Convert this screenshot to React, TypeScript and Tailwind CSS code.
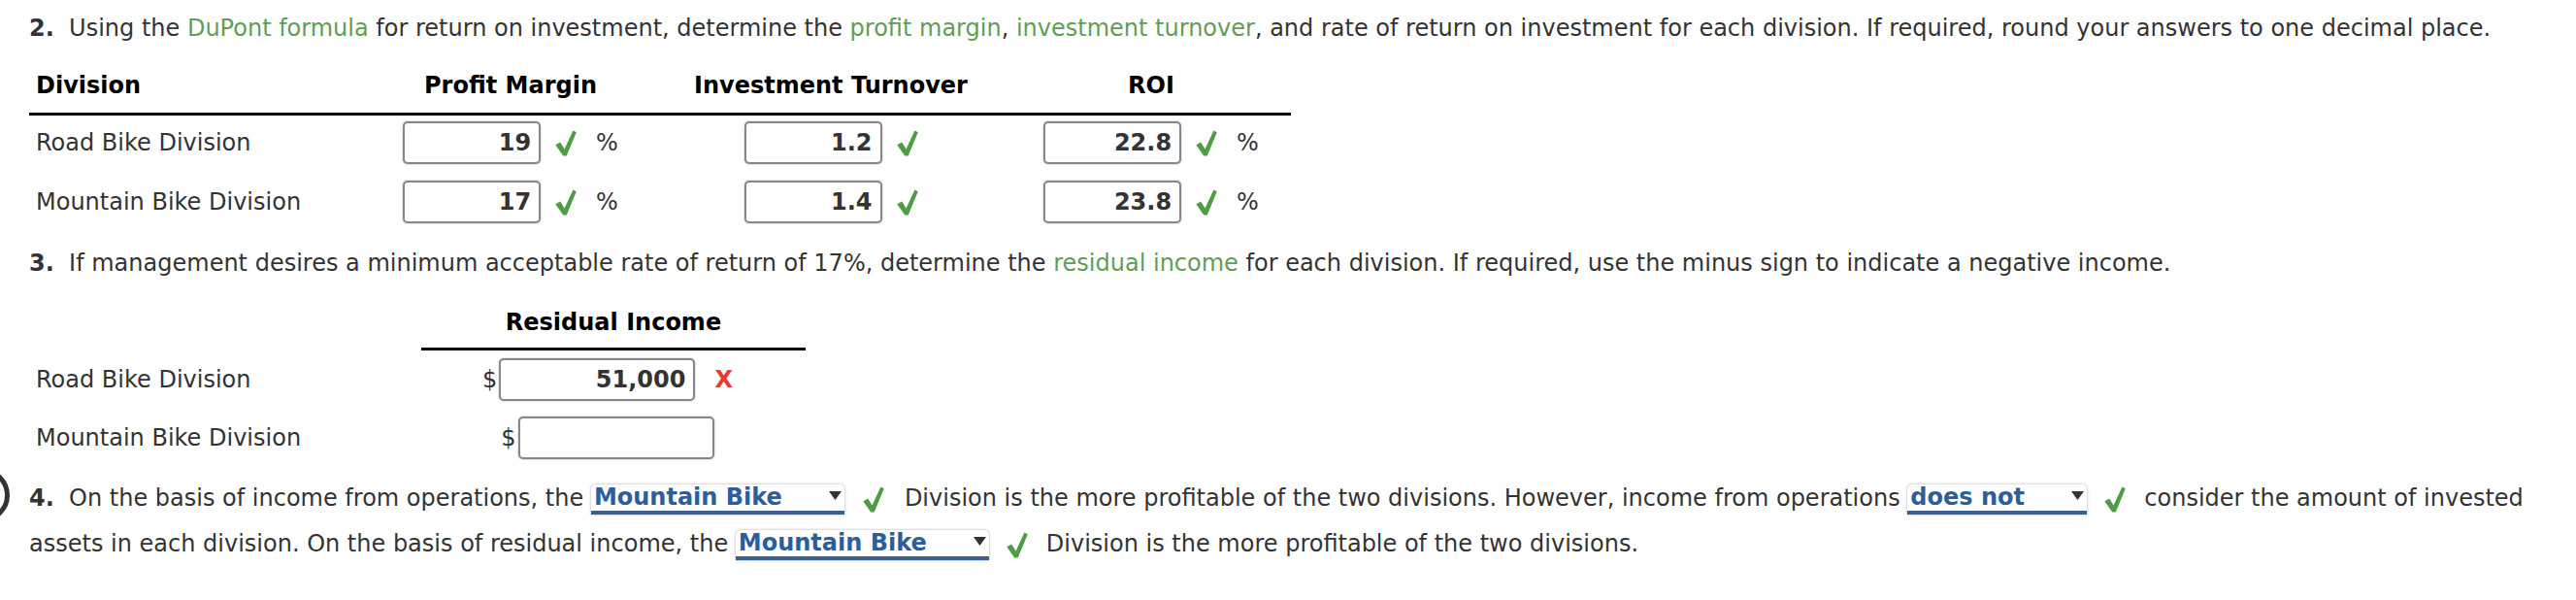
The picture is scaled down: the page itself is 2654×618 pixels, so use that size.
import React from "react";

const Check = ({ className = "" }: { className?: string }) => (
  <svg width="22" height="27" viewBox="0 0 22 27" className={className}>
    <path d="M0.3 15.2 L5.2 12.6 L9.6 19.4 L18.4 0.4 L21.8 2.2 L11.8 26.6 L8.2 26.6 Z" fill="#4f9c45" />
  </svg>
);

const Box = ({ v, className = "" }: { v: string; className?: string }) => (
  <div
    className={`h-[44px] rounded-[5px] border-2 border-[#878787] shadow-[0_0_2px_rgba(0,0,0,0.35)] bg-white flex items-center justify-end pr-[8px] font-bold text-[#333] ${className}`}
  >
    {v}
  </div>
);

const Sel = ({ label, className = "" }: { label: string; className?: string }) => (
  <span
    className={`relative inline-flex h-[31px] items-center align-middle rounded-t-[5px] bg-white shadow-[0_0_3px_rgba(0,0,0,0.35)] border-b-[4px] border-[#3b5f8f] pl-[3px] font-bold text-[#2c5e9c] leading-none ${className}`}
  >
    {label}
    <svg className="absolute right-[3px] top-[7px]" width="13" height="9" viewBox="0 0 13 9">
      <path d="M0 0 H13 L6.5 9 Z" fill="#333" />
    </svg>
  </span>
);

const G = ({ children }: { children: React.ReactNode }) => (
  <span className="text-[#609e56]">{children}</span>
);

const Cell = ({ v, pct }: { v: string; pct: boolean }) => (
  <div className="flex items-center justify-center">
    <Box v={v} className="w-[142px]" />
    <Check className="ml-[15px]" />
    {pct ? <span className="ml-[20px]">%</span> : null}
  </div>
);

export default function App() {
  return (
    <div className="relative min-h-screen overflow-hidden bg-white font-['DejaVu_Sans','Verdana',sans-serif] text-[24px] text-[#333] pl-[30px] pt-[11px]">
      <div className="absolute left-[-46px] top-[482px] w-[56px] h-[56px] rounded-full border-[5px] border-[#333]" />

      <div className="h-[36px] leading-[36px] whitespace-nowrap">
        <b>2.</b>&nbsp; Using the <G>DuPont formula</G> for return on investment, determine the{" "}
        <G>profit margin</G>, <G>investment turnover</G>, and rate of return on investment for each
        division. If required, round your answers to one decimal place.
      </div>

      <div className="w-[1330px]">
        <div className="mt-[23px] grid grid-cols-[331px_330px_330px_330px] h-[36px] items-center font-bold text-black">
          <div className="pl-[7px]">Division</div>
          <div className="text-center">Profit Margin</div>
          <div className="text-center">Investment Turnover</div>
          <div className="text-center">ROI</div>
        </div>
        <div className="mt-[10px] h-[3px] w-[1300px] bg-black" />
        <div className="mt-[5px] grid grid-cols-[331px_330px_330px_330px] h-[46px] items-center">
          <div className="pl-[7px]">Road Bike Division</div>
          <Cell v="19" pct={true} />
          <Cell v="1.2" pct={false} />
          <Cell v="22.8" pct={true} />
        </div>
        <div className="mt-[15px] grid grid-cols-[331px_330px_330px_330px] h-[46px] items-center">
          <div className="pl-[7px]">Mountain Bike Division</div>
          <Cell v="17" pct={true} />
          <Cell v="1.4" pct={false} />
          <Cell v="23.8" pct={true} />
        </div>
      </div>

      <div className="mt-[22px] h-[36px] leading-[36px] whitespace-nowrap">
        <b>3.</b>&nbsp; If management desires a minimum acceptable rate of return of 17%, determine the{" "}
        <G>residual income</G> for each division. If required, use the minus sign to indicate a negative
        income.
      </div>

      <div className="w-[800px]">
        <div className="mt-[25px] grid grid-cols-[404px_396px] h-[36px] items-center font-bold text-black">
          <div />
          <div className="text-center">Residual Income</div>
        </div>
        <div className="mt-[8px] ml-[404px] h-[3px] w-[396px] bg-black" />
        <div className="mt-[7px] grid grid-cols-[404px_396px] h-[46px] items-center">
          <div className="pl-[7px]">Road Bike Division</div>
          <div className="flex items-center justify-center pr-[12px]">
            <span>$</span>
            <Box v="51,000" className="ml-[2px] w-[202px]" />
            <span className="ml-[20px] font-bold text-[#e53b2f]">X</span>
          </div>
        </div>
        <div className="mt-[14px] grid grid-cols-[404px_396px] h-[46px] items-center">
          <div className="pl-[7px]">Mountain Bike Division</div>
          <div className="flex items-center justify-center pr-[12px]">
            <span>$</span>
            <Box v="" className="ml-[2px] w-[202px]" />
          </div>
        </div>
      </div>

      <div className="mt-[16px] leading-[47px] whitespace-nowrap">
        <div className="h-[47px]">
          <b>4.</b>&nbsp; On the basis of income from operations, the{" "}
          <Sel label="Mountain Bike" className="w-[261px]" />
          <Check className="inline-block align-middle ml-[19px] mr-[21px]" />
          Division is the more profitable of the two divisions. However, income from operations{" "}
          <Sel label="does not" className="w-[185px]" />
          <Check className="inline-block align-middle ml-[18px] mr-[19px]" />
          consider the amount of invested
        </div>
        <div className="h-[47px]">
          assets in each division. On the basis of residual income, the{" "}
          <Sel label="Mountain Bike" className="w-[261px]" />
          <Check className="inline-block align-middle ml-[18px] mr-[19px]" />
          Division is the more profitable of the two divisions.
        </div>
      </div>
    </div>
  );
}
